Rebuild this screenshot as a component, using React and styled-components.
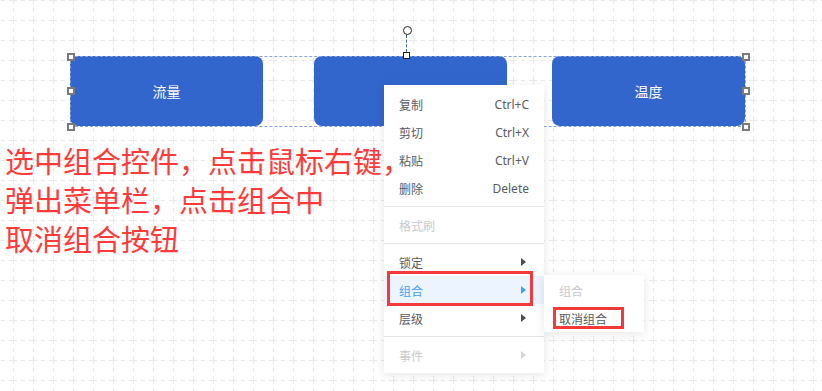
import React from "react";
import styled, { createGlobalStyle } from "styled-components";

const GlobalStyle = createGlobalStyle`
  html, body {
    margin: 0;
    padding: 0;
    background: #ffffff;
  }
  body {
    font-family: "Noto Sans CJK SC", "Noto Sans", sans-serif;
  }
`;

const Canvas = styled.div`
  position: relative;
  width: 822px;
  height: 391px;
  overflow: hidden;
  background: #ffffff;
`;

const GridLayer = styled.svg`
  position: absolute;
  left: 0;
  top: 0;
  width: 100%;
  height: 100%;
`;

const Node = styled.div`
  position: absolute;
  left: ${(p) => p.$left}px;
  top: 56px;
  width: ${(p) => p.$width}px;
  height: 70px;
  border-radius: 8px;
  background: #3366cc;
  color: #ffffff;
  font-size: 14px;
  display: flex;
  align-items: center;
  justify-content: center;
`;

const SelectionFrame = styled.div`
  position: absolute;
  left: 70px;
  top: 56px;
  width: 674px;
  height: 69px;
  border: 1px dashed #87a3dc;
`;

const Handle = styled.div`
  position: absolute;
  left: ${(p) => p.$x - 3}px;
  top: ${(p) => p.$y - 3}px;
  width: 4px;
  height: 4px;
  border: 2px solid #7a7a7a;
  background: #ffffff;
`;

const TopHandle = styled.div`
  position: absolute;
  left: 403px;
  top: 52px;
  width: 5px;
  height: 5px;
  border: 1.5px solid #222;
  background: #ffffff;
`;

const RotateKnob = styled.div`
  position: absolute;
  left: 403px;
  top: 26px;
  width: 7px;
  height: 7px;
  border: 1px solid #222;
  border-radius: 50%;
  background: #ffffff;
`;

const RotateStem = styled.div`
  position: absolute;
  left: 406px;
  top: 35px;
  height: 17px;
  border-left: 1px dashed #3a5fb0;
`;

const Note = styled.div`
  position: absolute;
  left: 5px;
  top: 141px;
  font-size: 29px;
  line-height: 39px;
  color: #ff3a3a;
  white-space: pre;
`;

const Menu = styled.div`
  position: absolute;
  left: ${(p) => p.$left}px;
  top: ${(p) => p.$top}px;
  width: ${(p) => p.$width}px;
  padding: ${(p) => p.$pad};
  box-sizing: border-box;
  background: #ffffff;
  box-shadow: 0 2px 10px rgba(0, 0, 0, 0.1);
  display: flex;
  flex-direction: column;
  font-size: 12px;
`;

const Item = styled.div`
  height: 28px;
  padding: 0 15px;
  display: flex;
  align-items: center;
  justify-content: space-between;
  color: ${(p) =>
    p.$disabled ? "#c8c9cc" : p.$active ? "#4a9ff5" : "#575b63"};
  background: ${(p) => (p.$active ? "#ecf5ff" : "transparent")};
`;

const Shortcut = styled.span`
  color: #575b63;
  font-family: "Noto Sans", sans-serif;
`;

const Arrow = styled.span`
  width: 0;
  height: 0;
  margin-right: 3px;
  border-top: 4px solid transparent;
  border-bottom: 4px solid transparent;
  border-left: 5px solid currentColor;
  color: ${(p) =>
    p.$disabled ? "#d6d7da" : p.$active ? "#4a9ff5" : "#4a4d53"};
`;

const Divider = styled.div`
  height: 1px;
  margin: 4px 0;
  background: #e4e6ea;
`;

const Callout = styled.div`
  position: absolute;
  left: ${(p) => p.$left}px;
  top: ${(p) => p.$top}px;
  width: ${(p) => p.$width}px;
  height: ${(p) => p.$height}px;
  border: 3px solid #f23a3a;
  box-sizing: border-box;
`;

const handles = [
  [70, 56],
  [70, 90],
  [70, 126],
  [745, 56],
  [745, 90],
  [745, 126],
];

const Grid = () => (
  <GridLayer>
    <defs>
      <pattern id="grid" x="13" y="0" width="20" height="20" patternUnits="userSpaceOnUse">
        <line x1="0.5" y1="0" x2="0.5" y2="20" stroke="#e9e9e9" strokeDasharray="4 4" />
        <line x1="0" y1="0.5" x2="20" y2="0.5" stroke="#e9e9e9" strokeDasharray="4 4" />
      </pattern>
    </defs>
    <rect width="100%" height="100%" fill="url(#grid)" />
  </GridLayer>
);

export default function App() {
  return (
    <>
      <GlobalStyle />
      <Canvas>
        <Grid />
        <Node $left={70} $width={193}>流量</Node>
        <Node $left={314} $width={193}>压力</Node>
        <Node $left={552} $width={193}>温度</Node>
        <SelectionFrame />
        {handles.map(([x, y]) => (
          <Handle key={`${x}-${y}`} $x={x} $y={y} />
        ))}
        <RotateStem />
        <RotateKnob />
        <TopHandle />

        <Menu $left={384} $top={85} $width={160} $pad="5px 0 4px">
          <Item>复制<Shortcut>Ctrl+C</Shortcut></Item>
          <Item>剪切<Shortcut>Ctrl+X</Shortcut></Item>
          <Item>粘贴<Shortcut>Ctrl+V</Shortcut></Item>
          <Item>删除<Shortcut>Delete</Shortcut></Item>
          <Divider />
          <Item $disabled>格式刷</Item>
          <Divider />
          <Item>锁定<Arrow /></Item>
          <Item $active>组合<Arrow $active /></Item>
          <Item>层级<Arrow /></Item>
          <Divider />
          <Item $disabled>事件<Arrow $disabled /></Item>
        </Menu>

        <Menu $left={544} $top={275} $width={100} $pad="1px 0 0">
          <Item $disabled>组合</Item>
          <Item>取消组合</Item>
        </Menu>

        <Note>{"选中组合控件，点击鼠标右键，\n弹出菜单栏，点击组合中\n取消组合按钮"}</Note>

        <Callout $left={387} $top={271} $width={146} $height={35} />
        <Callout $left={553} $top={307} $width={71} $height={22} />
      </Canvas>
    </>
  );
}
